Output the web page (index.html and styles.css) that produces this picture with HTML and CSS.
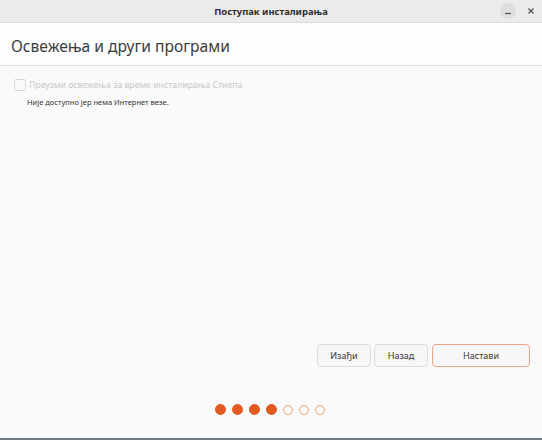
FILE: index.html
```html
<!DOCTYPE html>
<html lang="sr">
<head>
<meta charset="utf-8">
<link rel="stylesheet" href="styles.css">
</head>
<body>
<div class="window">
  <div class="titlebar">
    <div class="title">Поступак инсталирања</div>
    <div class="controls">
      <span class="ctl"><svg width="8" height="8" viewBox="0 0 8 8"><path d="M1 6.5h6" stroke="#555" stroke-width="1.2"/></svg></span>
      <span class="ctl"><svg width="8" height="8" viewBox="0 0 8 8"><path d="M1.5 1.5l5 5M6.5 1.5l-5 5" stroke="#555" stroke-width="1.2"/></svg></span>
    </div>
  </div>
  <div class="header"><h1>Освежења и други програми</h1></div>
  <div class="content">
    <label class="check"><span class="box"></span>Преузми освежења за време инсталирања Стиепа</label>
    <div class="note">Није доступно јер нема Интернет везе.</div>
  </div>
  <div class="buttons">
    <button class="btn">Изађи</button>
    <button class="btn">Назад</button>
    <button class="btn primary">Настави</button>
  </div>
  <div class="dots">
    <span class="dot on"></span><span class="dot on"></span><span class="dot on"></span><span class="dot on"></span><span class="dot"></span><span class="dot"></span><span class="dot"></span>
  </div>
</div>
<div class="desk"></div>
</body>
</html>
```
FILE: styles.css
```css
html, body { margin: 0; padding: 0; }
body {
  width: 542px; height: 440px; overflow: hidden;
  background: #fafafa;
  font-family: "Noto Sans", "DejaVu Sans", sans-serif;
  display: flex; flex-direction: column;
}
.window {
  flex: 1; display: flex; flex-direction: column;
  background: #fafafa;
}
.titlebar {
  height: 22px; background: #ebebeb;
  border-bottom: 1px solid #dcdcdc;
  display: flex; align-items: center; justify-content: center;
  position: relative;
}
.title { font-size: 9.4px; font-weight: bold; color: #2e2e2e; }
.controls {
  position: absolute; right: 3px; top: 3px;
  display: flex; gap: 7px;
}
.ctl {
  width: 16px; height: 16px; border-radius: 50%;
  background: #dedede;
  display: flex; align-items: center; justify-content: center;
}
.ctl + .ctl { background: transparent; }
.header {
  height: 42px; background: #fdfdfd;
  border-bottom: 1px solid #e2e2e2;
  display: flex; align-items: center;
}
h1 {
  margin: 3px 0 0 11px; font-weight: normal;
  font-size: 15.6px; color: #3c3c3c;
}
.content { padding: 13px 14px 0 14px; flex: 1; }
.check {
  display: flex; align-items: center; gap: 3px;
  font-size: 8.7px; color: #c8c8c8;
}
.box {
  width: 10px; height: 10px; border: 1px solid #d8d8d8;
  border-radius: 2px; background: #fafafa;
}
.note { font-size: 7.5px; color: #333; margin: 6px 0 0 13px; }
.buttons {
  display: flex; justify-content: flex-end; gap: 3px;
  padding: 0 12px 0 0; margin-bottom: 37px;
}
.btn {
  font-family: inherit; font-size: 9px; color: #3a3a3a;
  height: 23px; background: #f7f7f7;
  border: 1px solid #dcdcdc; border-radius: 4px;
  padding: 0; width: 54px;
}
.btn.primary { width: 98px; border-color: #eaa487; margin-left: 1px; }
.dots {
  display: flex; justify-content: center; gap: 6px;
  height: 34px; align-items: flex-start;
  padding-right: 2px;
}
.dot {
  width: 10px; height: 10px; margin-top: 0.5px; border-radius: 50%;
  border: 1.3px solid #ee9a78; box-sizing: border-box;
}
.dot.on { background: #e25a21; border-color: #e25a21; width: 11px; height: 11px; margin-top: 0; }
.desk { height: 2px; background: #6d7a80; }
```
